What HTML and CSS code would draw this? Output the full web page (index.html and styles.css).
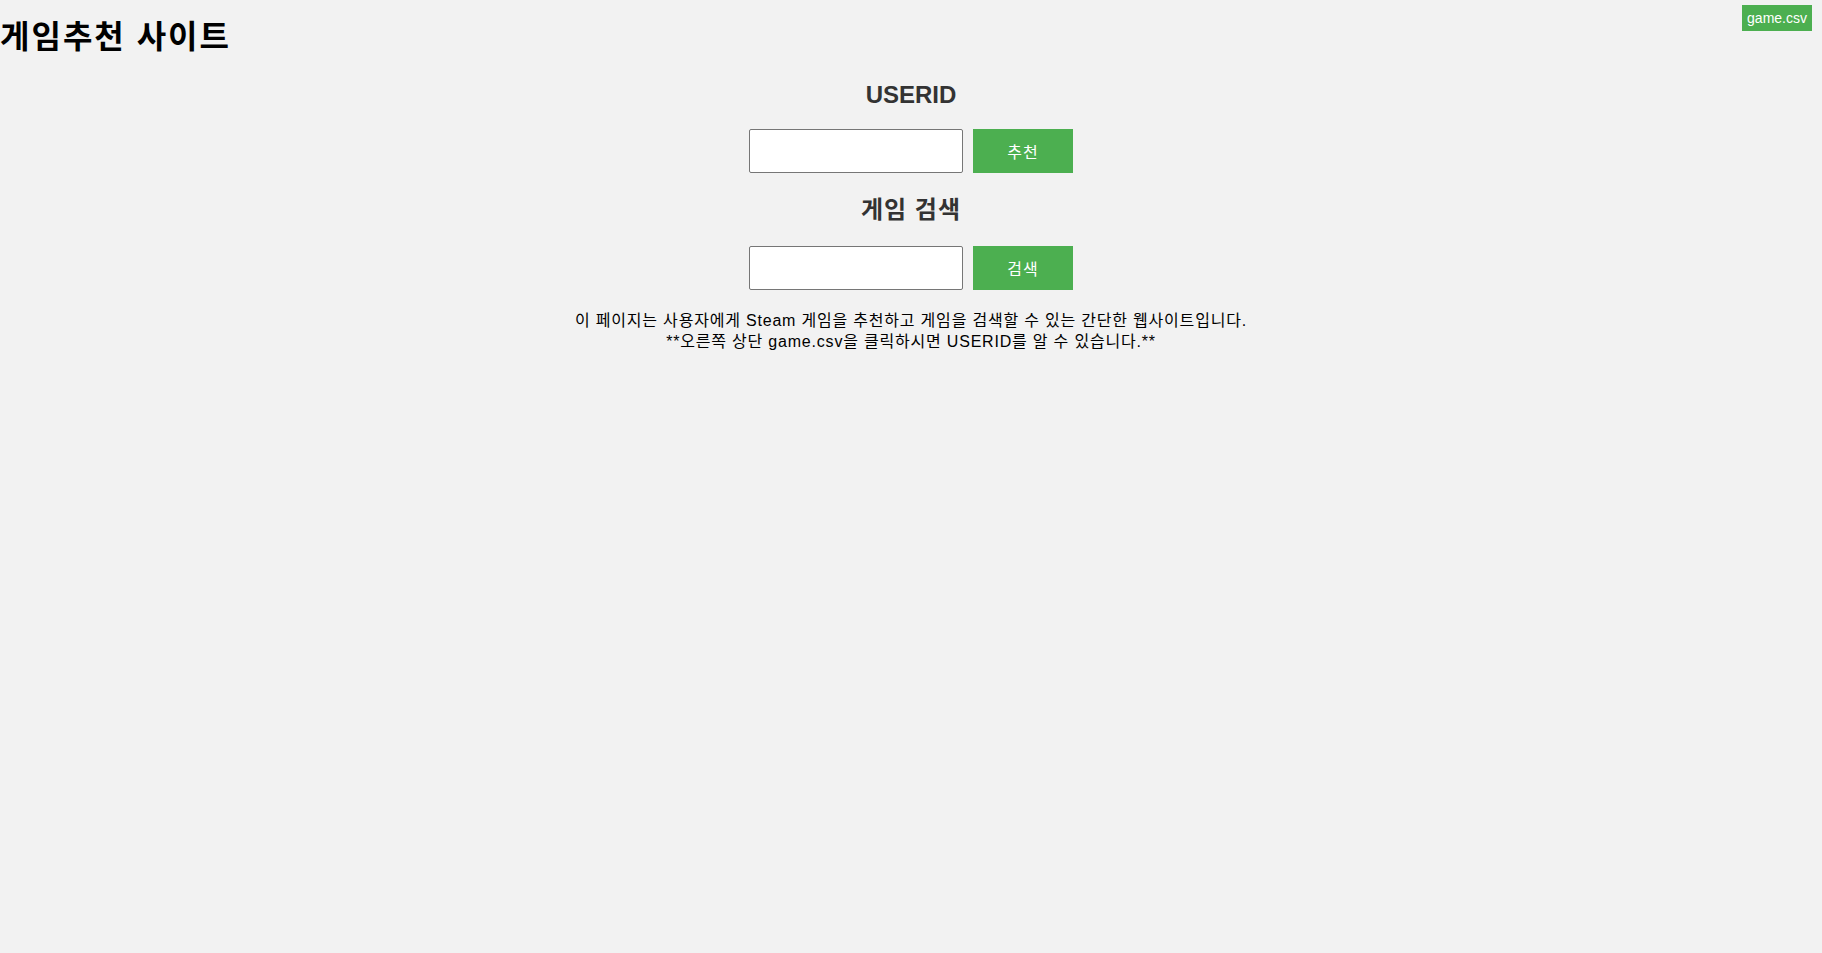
FILE: index.html
```html
<!DOCTYPE html>
<html lang="ko">
<head>
<meta charset="utf-8">
<title>게임추천 사이트</title>
<link rel="stylesheet" href="styles.css">
</head>
<body>
<a class="csv-link" href="#">game.csv</a>
<h1 class="site-title">게임추천 사이트</h1>
<main class="content">
  <h2 class="section-title">USERID</h2>
  <form class="row">
    <input class="field" type="text">
    <button class="btn" type="button">추천</button>
  </form>
  <h2 class="section-title ko">게임 검색</h2>
  <form class="row">
    <input class="field" type="text">
    <button class="btn" type="button">검색</button>
  </form>
  <p class="desc">이 페이지는 사용자에게 Steam 게임을 추천하고 게임을 검색할 수 있는 간단한 웹사이트입니다.<br>**오른쪽 상단 game.csv을 클릭하시면 USERID를 알 수 있습니다.**</p>
</main>
</body>
</html>
```
FILE: styles.css
```css
html, body {
  margin: 0;
  padding: 0;
}
body {
  background: #f2f2f2;
  font-family: "Liberation Sans", Arial, "Noto Sans CJK KR", sans-serif;
  color: #000;
  min-height: 100vh;
}
.csv-link {
  position: absolute;
  top: 5px;
  right: 10px;
  background: #4CAF50;
  color: #fff;
  text-decoration: none;
  font-size: 14px;
  line-height: 26px;
  height: 26px;
  padding: 0 5px;
}
.site-title {
  font-size: 32px;
  font-weight: bold;
  margin: 19px 0 0 0;
  line-height: 37px;
  letter-spacing: 2px;
}
.content {
  display: flex;
  flex-direction: column;
  align-items: center;
}
.section-title {
  font-size: 24px;
  font-weight: bold;
  color: #333;
  margin: 22px 0 18px;
  line-height: 33px;
}
.section-title.ko {
  letter-spacing: 1px;
  margin: 20px 0 20px;
}
.row {
  display: flex;
  gap: 10px;
  margin: 0;
}
.field {
  box-sizing: border-box;
  width: 214px;
  height: 44px;
  border: 1px solid #767676;
  border-radius: 2px;
  background: #fff;
  margin: 0;
  padding: 0 8px;
  font-size: 16px;
}
.btn {
  box-sizing: border-box;
  width: 100px;
  height: 44px;
  border: none;
  background: #4CAF50;
  color: #fff;
  font-family: "Liberation Sans", Arial, "Noto Sans CJK KR", sans-serif;
  font-size: 16px;
  letter-spacing: 1px;
  margin: 0;
  padding: 0;
}
.desc {
  text-align: center;
  font-size: 16px;
  line-height: 21px;
  letter-spacing: 0.8px;
  margin: 20px 0 16px;
}
```
